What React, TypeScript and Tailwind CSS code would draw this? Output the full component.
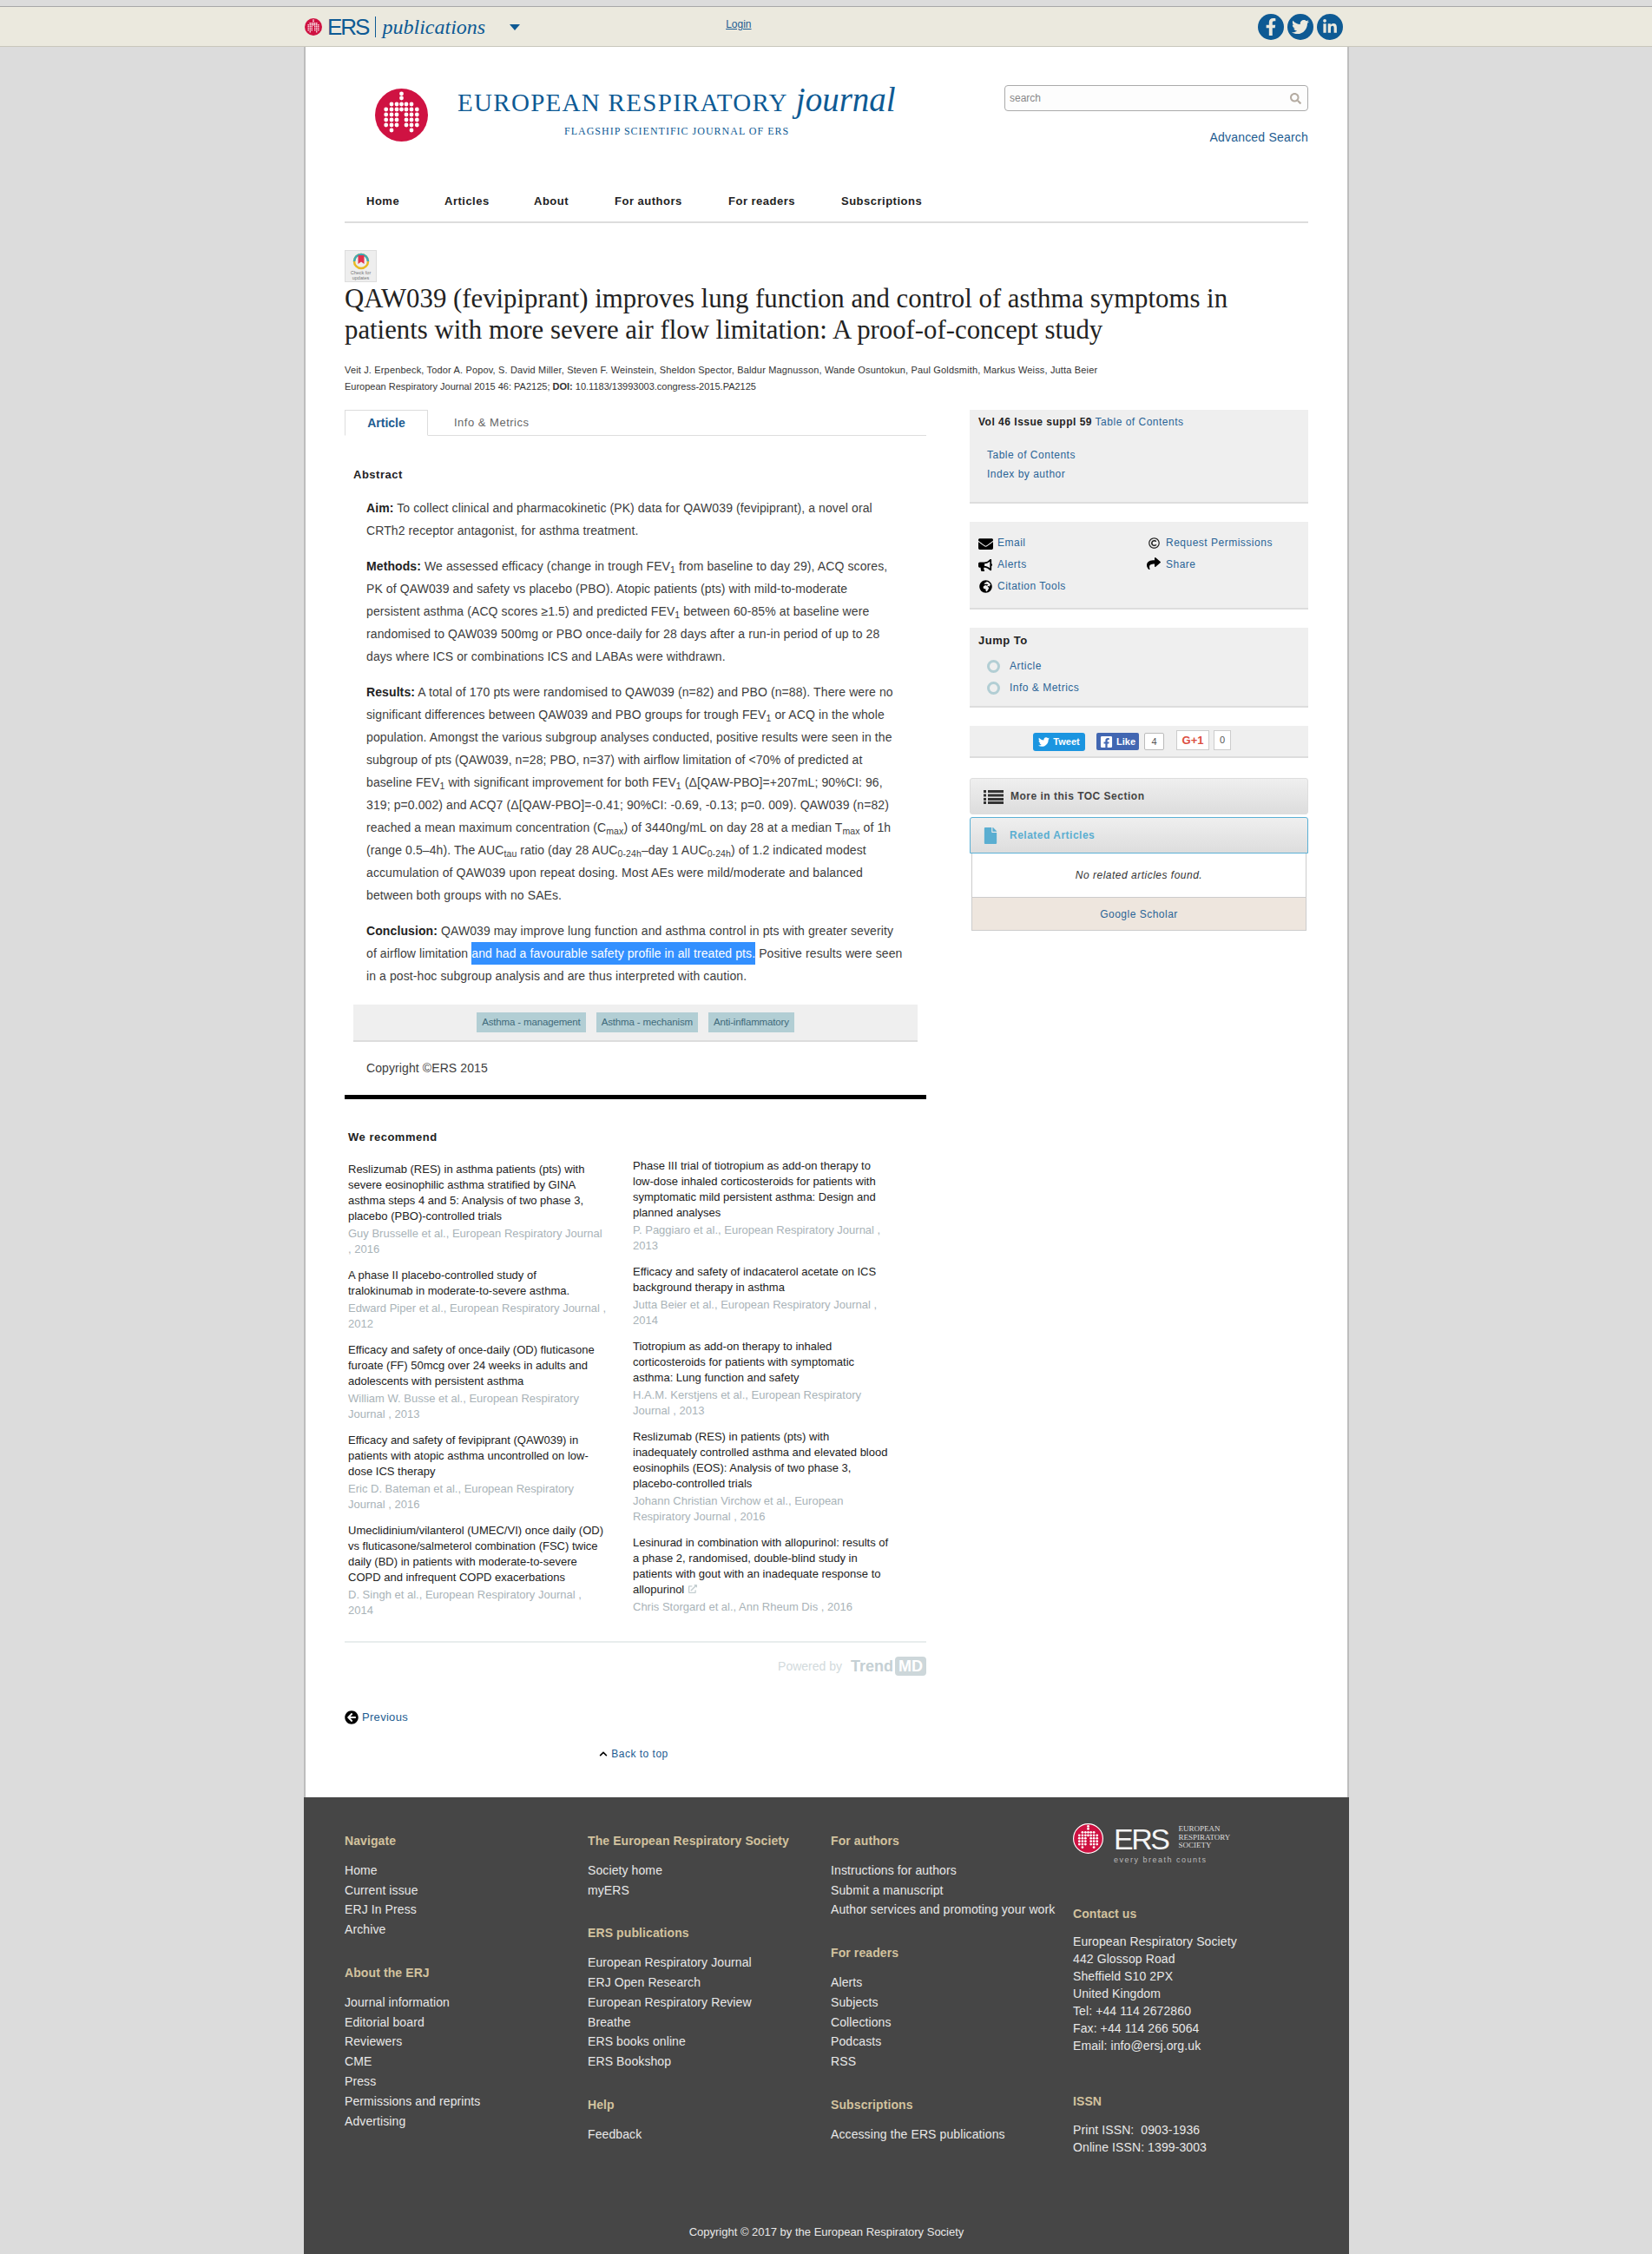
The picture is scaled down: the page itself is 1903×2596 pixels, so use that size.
import { FaEnvelope, FaBullhorn, FaGlobeAfrica, FaShare, FaRegCopyright, FaArrowCircleLeft, FaChevronUp, FaFile, FaTwitter, FaFacebookF, FaFacebookSquare, FaLinkedinIn, FaSearch, FaExternalLinkAlt } from "react-icons/fa";

const navItems = [
  { label: "Home", w: "w-[90px]" },
  { label: "Articles", w: "w-[103px]" },
  { label: "About", w: "w-[93px]" },
  { label: "For authors", w: "w-[131px]" },
  { label: "For readers", w: "w-[130px]" },
  { label: "Subscriptions", w: "w-[100px]" },
];

const leftRecs = [
  { t: "Reslizumab (RES) in asthma patients (pts) with severe eosinophilic asthma stratified by GINA asthma steps 4 and 5: Analysis of two phase 3, placebo (PBO)-controlled trials", a: "Guy Brusselle et al., European Respiratory Journal , 2016" },
  { t: "A phase II placebo-controlled study of\ntralokinumab in moderate-to-severe asthma.", a: "Edward Piper et al., European Respiratory Journal , 2012" },
  { t: "Efficacy and safety of once-daily (OD) fluticasone furoate (FF) 50mcg over 24 weeks in adults and adolescents with persistent asthma", a: "William W. Busse et al., European Respiratory Journal , 2013" },
  { t: "Efficacy and safety of fevipiprant (QAW039) in patients with atopic asthma uncontrolled on low-dose ICS therapy", a: "Eric D. Bateman et al., European Respiratory Journal , 2016" },
  { t: "Umeclidinium/vilanterol (UMEC/VI) once daily (OD) vs fluticasone/salmeterol combination (FSC) twice daily (BD) in patients with moderate-to-severe COPD and infrequent COPD exacerbations", a: "D. Singh et al., European Respiratory Journal , 2014" },
];

const rightRecs = [
  { t: "Phase III trial of tiotropium as add-on therapy to low-dose inhaled corticosteroids for patients with symptomatic mild persistent asthma: Design and planned analyses", a: "P. Paggiaro et al., European Respiratory Journal , 2013" },
  { t: "Efficacy and safety of indacaterol acetate on ICS background therapy in asthma", a: "Jutta Beier et al., European Respiratory Journal , 2014" },
  { t: "Tiotropium as add-on therapy to inhaled corticosteroids for patients with symptomatic asthma: Lung function and safety", a: "H.A.M. Kerstjens et al., European Respiratory Journal , 2013" },
  { t: "Reslizumab (RES) in patients (pts) with inadequately controlled asthma and elevated blood eosinophils (EOS): Analysis of two phase 3, placebo-controlled trials", a: "Johann Christian Virchow et al., European Respiratory Journal , 2016" },
  { t: "Lesinurad in combination with allopurinol: results of a phase 2, randomised, double-blind study in patients with gout with an inadequate response to allopurinol", a: "Chris Storgard et al., Ann Rheum Dis , 2016", ext: true },
];

const footerCols = [
  [
    { h: "Navigate", l: ["Home", "Current issue", "ERJ In Press", "Archive"] },
    { h: "About the ERJ", l: ["Journal information", "Editorial board", "Reviewers", "CME", "Press", "Permissions and reprints", "Advertising"] },
  ],
  [
    { h: "The European Respiratory Society", l: ["Society home", "myERS"] },
    { h: "ERS publications", l: ["European Respiratory Journal", "ERJ Open Research", "European Respiratory Review", "Breathe", "ERS books online", "ERS Bookshop"] },
    { h: "Help", l: ["Feedback"] },
  ],
  [
    { h: "For authors", l: ["Instructions for authors", "Submit a manuscript", "Author services and promoting your work"] },
    { h: "For readers", l: ["Alerts", "Subjects", "Collections", "Podcasts", "RSS"] },
    { h: "Subscriptions", l: ["Accessing the ERS publications"] },
  ],
];

const lungDots: [number, number][] = [
  [30.5, 6], [30.5, 11], [30.5, 18], [30.5, 24],
  ...[24, 30, 36, 42].flatMap((y) => [[12.7, y], [48.3, y]] as [number, number][]),
  ...[18, 24, 30, 36, 42, 48].flatMap((y) => [[19, y], [42, y]] as [number, number][]),
  ...[18, 24, 30, 36, 42].flatMap((y) => [[25, y], [36, y]] as [number, number][]),
];

function ErsMark({ className, ring }: { className: string; ring?: boolean }) {
  return (
    <svg viewBox="0 0 61 61" className={className}>
      <circle cx="30.5" cy="30.5" r={ring ? 29.5 : 30.5} fill="#cf1242" stroke={ring ? "#fff" : "none"} strokeWidth={ring ? 2 : 0} />
      {lungDots.map(([x, y], i) => (
        <circle key={i} cx={x} cy={y} r="2.4" fill="#fff" />
      ))}
    </svg>
  );
}

function RecList({ items }: { items: { t: string; a: string; ext?: boolean }[] }) {
  return (
    <div className="flex flex-col gap-[12px]">
      {items.map((r, i) => (
        <div key={i} className="text-[13px] leading-[18px]">
          <div className="text-[#222] whitespace-pre-line">
            {r.t}
            {r.ext && <FaExternalLinkAlt className="inline ml-[5px] mb-[3px] text-[10px] text-[#c3cdd0]" />}
          </div>
          <div className="mt-[2px] text-[#a9b3b8]">{r.a}</div>
        </div>
      ))}
    </div>
  );
}

export default function App() {
  return (
    <div className="min-h-[2596px] bg-[#dcdcdc] pt-[7px] font-['Liberation_Sans',Arial,sans-serif] text-[#333]">
      {/* ers bar */}
      <div className="h-[47px] bg-[#ebe9de] border-t border-t-[#a8a8a8] border-b border-b-[#c9c7bc]">
        <div className="ml-[351px] w-[1202px] h-full flex items-center relative">
          <ErsMark className="w-[20px] h-[20px]" />
          <span className="ml-[6px] text-[26px] tracking-[-2px] text-[#0e5a94] leading-none">ERS</span>
          <span className="ml-[8px] w-px h-[24px] bg-[#0e5a94]" />
          <span className="ml-[7px] font-['Liberation_Serif',serif] italic text-[24px] leading-none text-[#0e5a94]">publications</span>
          <span className="ml-[28px] mt-[2px] w-0 h-0 border-x-[6px] border-x-transparent border-t-[7px] border-t-[#0e5a94]" />
          <a className="ml-[237px] -mt-[6px] text-[12px] text-[#1d5c91] underline">Login</a>
          <div className="ml-auto mr-[6px] flex gap-[4px]">
            <span className="w-[30px] h-[30px] rounded-full bg-[#0e5a94] flex items-center justify-center text-[#ebe9de] text-[20px]"><FaFacebookF /></span>
            <span className="w-[30px] h-[30px] rounded-full bg-[#0e5a94] flex items-center justify-center text-[#ebe9de] text-[20px]"><FaTwitter /></span>
            <span className="w-[30px] h-[30px] rounded-full bg-[#0e5a94] flex items-center justify-center text-[#ebe9de] text-[18px]"><FaLinkedinIn /></span>
          </div>
        </div>
      </div>

      <div className="ml-[350px] w-[1204px]">
        <main className="bg-white border-x-2 border-x-[#bdbdbd] px-[45px] h-[2016px]">
          {/* masthead */}
          <header className="flex justify-between h-[160px]">
            <div className="flex pl-[35px] pt-[48px]">
              <ErsMark className="w-[61px] h-[61px]" />
              <div className="ml-[34px] -mt-[5px] font-['Liberation_Serif',serif] text-[#0e5a94]">
                <div className="flex items-baseline whitespace-nowrap">
                  <span className="text-[29px] leading-[36px] tracking-[1.3px]">EUROPEAN RESPIRATORY</span>
                  <span className="ml-[9px] italic text-[39px] leading-[36px]">journal</span>
                </div>
                <div className="mt-[8px] ml-[123px] text-[12px] leading-[14px] tracking-[1px] whitespace-nowrap">FLAGSHIP SCIENTIFIC JOURNAL OF ERS</div>
              </div>
            </div>
            <div className="w-[350px] pt-[44px]">
              <div className="h-[30px] border border-[#aaa] rounded-[4px] bg-[#fdfdfd] flex items-center justify-between pl-[5px] pr-[7px] text-[12px] text-[#888]">
                <span>search</span>
                <FaSearch className="text-[13px] text-[#b5aca2]" />
              </div>
              <div className="mt-[20px] text-right text-[14px] leading-[20px] tracking-[0.2px] text-[#1d5c91]">Advanced Search</div>
            </div>
          </header>

          <nav className="flex h-[43px] pt-[9px] pl-[25px] border-b-2 border-b-[#dddddd] text-[13px] leading-[18px] font-bold tracking-[0.5px] text-[#222]">
            {navItems.map((n) => (
              <a key={n.label} className={n.w}>{n.label}</a>
            ))}
          </nav>

          {/* crossmark badge */}
          <div className="mt-[31px] w-[37px] h-[37px] bg-[#eee] border border-[#ddd] flex flex-col items-center">
            <svg viewBox="0 0 20 20" className="w-[20px] h-[20px] mt-[2px]">
              <circle cx="10" cy="10" r="8" fill="none" stroke="#e8b923" strokeWidth="2.5" />
              <path d="M10 2 A8 8 0 0 1 18 10" fill="none" stroke="#3fa9b5" strokeWidth="2.5" />
              <path d="M2 10 A8 8 0 0 1 10 2" fill="none" stroke="#3fa9b5" strokeWidth="2.5" />
              <path d="M6.5 3h7v10l-3.5-2.5L6.5 13z" fill="#e2304b" />
            </svg>
            <span className="text-[5.5px] leading-[6px] text-center text-[#777]">Check for<br />updates</span>
          </div>

          <h1 className="mt-px font-['Liberation_Serif',serif] text-[30.8px] leading-[36px] text-[#222] whitespace-pre-line">
            QAW039 (fevipiprant) improves lung function and control of asthma symptoms in{"\n"}patients with more severe air flow limitation: A proof-of-concept study
          </h1>

          <div className="mt-[19px] text-[11px] leading-[19px] text-[#333]">
            <div className="tracking-[0.16px]">Veit J. Erpenbeck, Todor A. Popov, S. David Miller, Steven F. Weinstein, Sheldon Spector, Baldur Magnusson, Wande Osuntokun, Paul Goldsmith, Markus Weiss, Jutta Beier</div>
            <div>European Respiratory Journal 2015 46: PA2125; <b>DOI:</b> 10.1183/13993003.congress-2015.PA2125</div>
          </div>

          <div className="mt-[17px] flex justify-between">
            {/* article column */}
            <div className="w-[670px]">
              <div className="flex h-[30px] border-b border-b-[#ddd]">
                <div className="w-[96px] h-[30px] border border-[#ddd] border-b-white bg-white flex items-center justify-center text-[14px] font-bold text-[#1d5c91]">Article</div>
                <div className="ml-[30px] flex items-center text-[13px] text-[#666] tracking-[0.5px]">Info &amp; Metrics</div>
              </div>

              <h2 className="mt-[36px] ml-[10px] text-[13px] leading-[18px] font-bold tracking-[0.5px] text-[#222]">Abstract</h2>

              <div className="mt-[16px] ml-[25px] w-[619px] flex flex-col gap-[15px] text-[14px] leading-[26px] tracking-[0.1px] text-[#3d3d3d]">
                <p><b className="text-[#222]">Aim:</b> To collect clinical and pharmacokinetic (PK) data for QAW039 (fevipiprant), a novel oral CRTh2 receptor antagonist, for asthma treatment.</p>
                <p><b className="text-[#222]">Methods:</b> We assessed efficacy (change in trough FEV<sub>1</sub> from baseline to day 29), ACQ scores, PK of QAW039 and safety vs placebo (PBO). Atopic patients (pts) with mild-to-moderate persistent asthma (ACQ scores ≥1.5) and predicted FEV<sub>1</sub> between 60-85% at baseline were randomised to QAW039 500mg or PBO once-daily for 28 days after a run-in period of up to 28 days where ICS or combinations ICS and LABAs were withdrawn.</p>
                <p><b className="text-[#222]">Results:</b> A total of 170 pts were randomised to QAW039 (n=82) and PBO (n=88). There were no significant differences between QAW039 and PBO groups for trough FEV<sub>1</sub> or ACQ in the whole population. Amongst the various subgroup analyses conducted, positive results were seen in the subgroup of pts (QAW039, n=28; PBO, n=37) with airflow limitation of &lt;70% of predicted at baseline FEV<sub>1</sub> with significant improvement for both FEV<sub>1</sub> (Δ[QAW-PBO]=+207mL; 90%CI: 96, 319; p=0.002) and ACQ7 (Δ[QAW-PBO]=-0.41; 90%CI: -0.69, -0.13; p=0. 009). QAW039 (n=82) reached a mean maximum concentration (C<sub>max</sub>) of 3440ng/mL on day 28 at a median T<sub>max</sub> of 1h (range 0.5–4h). The AUC<sub>tau</sub> ratio (day 28 AUC<sub>0-24h</sub>–day 1 AUC<sub>0-24h</sub>) of 1.2 indicated modest accumulation of QAW039 upon repeat dosing. Most AEs were mild/moderate and balanced between both groups with no SAEs.</p>
                <p><b className="text-[#222]">Conclusion:</b> QAW039 may improve lung function and asthma control in pts with greater severity of airflow limitation <span className="bg-[#3390ff] text-white py-[5px]">and had a favourable safety profile in all treated pts.</span> Positive results were seen in a post-hoc subgroup analysis and are thus interpreted with caution.</p>
              </div>

              <div className="mt-[20px] mx-[10px] h-[43px] bg-[#efefef] border-b-2 border-b-[#dddddd] flex justify-center gap-[12px] pt-[9px] text-[11.5px] tracking-[-0.15px] text-[#3f6a7a]">
                <span className="h-[23px] px-[6px] leading-[23px] bg-[#b2ced4]">Asthma - management</span>
                <span className="h-[23px] px-[6px] leading-[23px] bg-[#b2ced4]">Asthma - mechanism</span>
                <span className="h-[23px] px-[6px] leading-[23px] bg-[#b2ced4]">Anti-inflammatory</span>
              </div>

              <p className="mt-[17px] ml-[25px] text-[14px] leading-[26px] tracking-[0.1px] text-[#3d3d3d]">Copyright ©ERS 2015</p>

              <div className="mt-[18px] h-[5px] bg-black" />

              <h3 className="mt-[35px] ml-[4px] text-[13px] leading-[18px] font-bold tracking-[0.5px] text-[#222]">We recommend</h3>

              <div className="mt-[19px] ml-[4px] flex h-[552px]">
                <div className="w-[299px]"><RecList items={leftRecs} /></div>
                <div className="ml-[29px] w-[299px] -mt-[4px]"><RecList items={rightRecs} /></div>
              </div>

              <div className="h-[2px] bg-[#e8eded]" />
              <div className="mt-[14px] h-[26px] flex items-center justify-end text-[#d2dadc]">
                <span className="text-[14px]">Powered by</span>
                <span className="ml-[10px] text-[18px] font-bold text-[#c5d0d4]">Trend</span>
                <span className="ml-[2px] h-[22px] px-[4px] rounded-[4px] bg-[#cdd7da] text-white text-[18px] font-bold leading-[22px]">MD</span>
              </div>

              <div className="mt-[36px] flex items-center h-[20px] text-[13px] tracking-[0.3px] text-[#1d5c91]">
                <FaArrowCircleLeft className="text-[16px] text-black mr-[4px]" />
                Previous
              </div>
              <div className="mt-[22px] h-[20px] flex items-center justify-center pr-[4px] text-[12px] tracking-[0.5px] text-[#1d5c91]">
                <FaChevronUp className="text-[10px] text-black mr-[4px]" />
                Back to top
              </div>
            </div>

            {/* sidebar */}
            <aside className="w-[390px] text-[12px] tracking-[0.5px] text-[#2a6496]">
              <div className="h-[108px] bg-[#efefef] border-b-2 border-b-[#dddddd] pt-[5px] pl-[10px] leading-[18px]">
                <div><b className="text-[#222]">Vol 46 Issue suppl 59</b> Table of Contents</div>
                <div className="mt-[20px] ml-[10px] flex flex-col gap-[4px]">
                  <span>Table of Contents</span>
                  <span>Index by author</span>
                </div>
              </div>

              <div className="mt-[21px] h-[101px] bg-[#efefef] border-b-2 border-b-[#dddddd] pt-[15px] pl-[10px] grid grid-cols-2 auto-rows-[25px] leading-[18px]">
                <div className="flex items-start"><FaEnvelope className="w-[17px] h-[17px] mt-[2px] mr-[5px] text-black" />Email</div>
                <div className="flex items-start pl-[6px]"><FaRegCopyright className="w-[13px] h-[13px] mt-[3px] mr-[7px] text-[#222]" />Request Permissions</div>
                <div className="flex items-start"><FaBullhorn className="w-[16px] h-[16px] mt-[2px] mr-[6px] text-black" />Alerts</div>
                <div className="flex items-start pl-[4px]"><FaShare className="w-[16px] h-[16px] mr-[6px] text-black" />Share</div>
                <div className="flex items-start"><FaGlobeAfrica className="w-[15px] h-[15px] mt-[2px] ml-[1px] mr-[6px] text-black" />Citation Tools</div>
              </div>

              <div className="mt-[21px] h-[92px] bg-[#efefef] border-b-2 border-b-[#dddddd] pt-[6px] pl-[10px] leading-[18px]">
                <div className="text-[13px] font-bold text-[#222]">Jump To</div>
                <div className="mt-[11px] ml-[10px] flex flex-col gap-[7px]">
                  <div className="flex items-center"><span className="w-[15px] h-[15px] rounded-full border-[3px] border-[#b2ced4] mr-[11px]" />Article</div>
                  <div className="flex items-center"><span className="w-[15px] h-[15px] rounded-full border-[3px] border-[#b2ced4] mr-[11px]" />Info &amp; Metrics</div>
                </div>
              </div>

              <div className="mt-[21px] h-[37px] bg-[#efefef] border-b-2 border-b-[#dddddd] pt-[5px] pl-[73px] flex items-start text-[11px] tracking-normal">
                <span className="mt-[3px] h-[21px] w-[60px] rounded-[3px] bg-[#1b95e0] flex items-center justify-center gap-[4px] text-white font-bold"><FaTwitter className="text-[13px]" />Tweet</span>
                <span className="ml-[13px] mt-[3px] h-[20px] w-[49px] rounded-[2px] bg-[#4267b2] flex items-center justify-center gap-[4px] text-white font-bold"><FaFacebookSquare className="text-[15px]" />Like</span>
                <span className="ml-[6px] mt-[3px] h-[20px] w-[23px] border border-[#bbb] rounded-[2px] bg-white flex items-center justify-center text-[#555]">4</span>
                <span className="ml-[14px] h-[23px] w-[38px] border border-[#ccc] bg-white flex items-center justify-center text-[13px] font-bold text-[#dc4e41]">G+1</span>
                <span className="ml-[5px] h-[23px] w-[20px] border border-[#ccc] bg-white flex items-center justify-center text-[#555]">0</span>
              </div>

              <div className="mt-[23px] h-[42px] rounded-[3px] border border-[#dddddd] bg-gradient-to-b from-[#efefef] to-[#dddddd] flex items-center pl-[15px] text-[12px] font-bold text-[#444]">
                <svg viewBox="0 0 23 17" className="w-[23px] h-[17px] mr-[8px]" fill="#333">
                  <rect x="0" y="1" width="3" height="3" /><rect x="5" y="1" width="18" height="3" />
                  <rect x="0" y="5.5" width="3" height="3" /><rect x="5" y="5.5" width="18" height="3" />
                  <rect x="0" y="10" width="3" height="3" /><rect x="5" y="10" width="18" height="3" />
                  <rect x="0" y="14" width="3" height="3" /><rect x="5" y="14" width="18" height="3" />
                </svg>
                More in this TOC Section
              </div>
              <div className="mt-[3px] h-[42px] rounded-t-[3px] border border-[#5bb0d5] bg-gradient-to-b from-[#efefef] to-[#dddddd] flex items-center pl-[15px] text-[12px] font-bold text-[#5aaed1]">
                <FaFile className="w-[16px] h-[19px] mr-[14px]" />
                Related Articles
              </div>
              <div className="mx-[2px] border-x border-b border-[#cccccc]">
                <div className="h-[50px] flex items-center justify-center italic text-[#333]">No related articles found.</div>
                <div className="h-[38px] border-t border-t-[#cccccc] bg-[#eee6de] flex items-center justify-center text-[#2a6496]">Google Scholar</div>
              </div>
            </aside>
          </div>
        </main>

        <footer className="h-[526px] bg-[#464646] pt-[39px] flex flex-col text-[14px] leading-[22.8px] tracking-[0.1px] text-[#e8e8e8]">
          <div className="ml-[47px] flex">
            {footerCols.map((col, i) => (
              <div key={i} className="w-[280px] flex flex-col gap-[27px]">
                {col.map((s) => (
                  <div key={s.h}>
                    <h4 className="font-bold text-[#d2c29e]">{s.h}</h4>
                    <ul className="mt-[11px]">
                      {s.l.map((x) => (
                        <li key={x} className="whitespace-nowrap">{x}</li>
                      ))}
                    </ul>
                  </div>
                ))}
              </div>
            ))}
            <div className="-mt-[9px] -ml-px">
              <div className="flex items-start">
                <ErsMark className="w-[35px] h-[35px]" ring />
                <div className="ml-[12px]">
                  <div className="flex">
                    <span className="text-[34px] leading-[36px] tracking-[-2.5px] text-[#f4f4f4]">ERS</span>
                    <span className="ml-[12px] mt-[2px] font-['Liberation_Serif',serif] text-[9px] leading-[9.7px] tracking-normal text-[#ddd] whitespace-pre-line">{"EUROPEAN\nRESPIRATORY\nSOCIETY"}</span>
                  </div>
                  <div className="text-[9px] leading-[12px] tracking-[1.5px] text-[#bbb] whitespace-nowrap">every breath counts</div>
                </div>
              </div>
              <h4 className="mt-[45px] font-bold text-[#d2c29e]">Contact us</h4>
              <div className="mt-[10px] leading-[20px]">
                <div>European Respiratory Society</div>
                <div>442 Glossop Road</div>
                <div>Sheffield S10 2PX</div>
                <div>United Kingdom</div>
                <div>Tel: +44 114 2672860</div>
                <div>Fax: +44 114 266 5064</div>
                <div>Email: info@ersj.org.uk</div>
              </div>
              <h4 className="mt-[43px] font-bold text-[#d2c29e]">ISSN</h4>
              <div className="mt-[11px] leading-[20px] whitespace-pre">
                <div>Print ISSN:  0903-1936</div>
                <div>Online ISSN: 1399-3003</div>
              </div>
            </div>
          </div>
          <div className="mt-auto pb-[13px] text-center text-[13px] tracking-normal">Copyright © 2017 by the European Respiratory Society</div>
        </footer>
      </div>
    </div>
  );
}
